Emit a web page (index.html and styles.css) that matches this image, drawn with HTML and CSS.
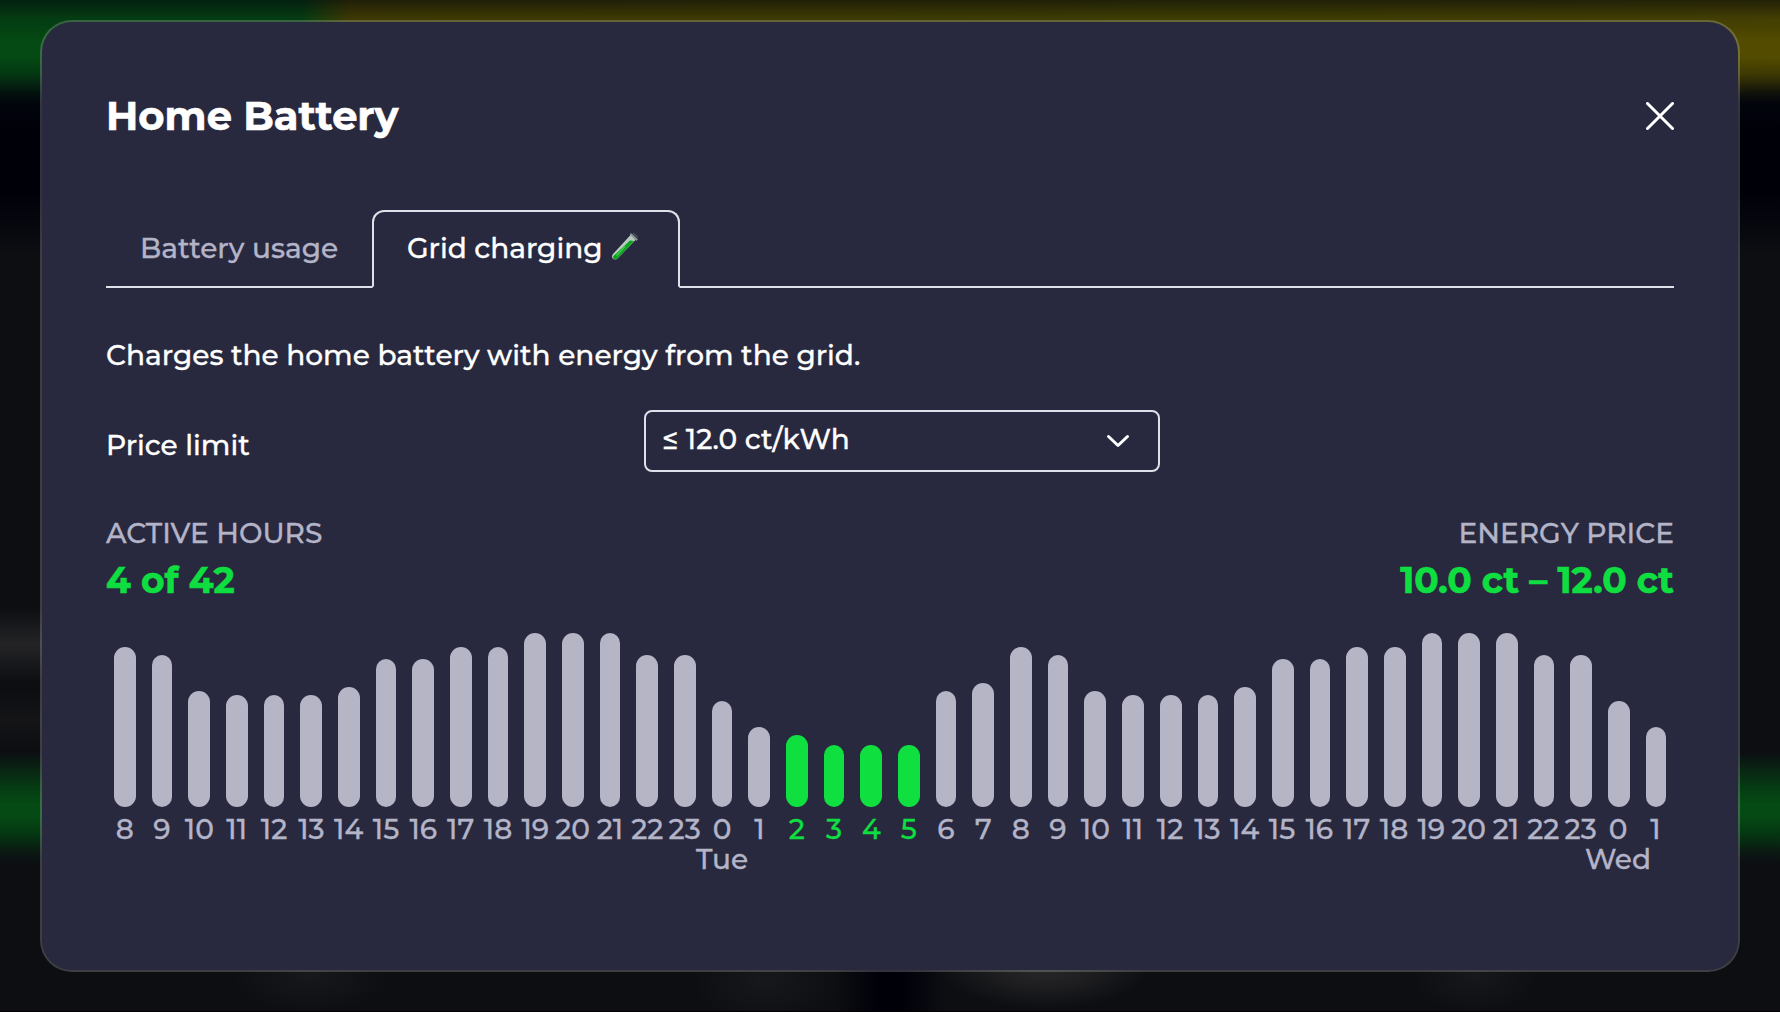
FILE: index.html
```html
<!DOCTYPE html>
<html lang="en">
<head>
<meta charset="utf-8">
<title>Home Battery</title>
<link rel="stylesheet" href="styles.css">
</head>
<body>
<div class="glow glow-top"></div>
<div class="glow glow-mid"></div>
<main class="modal">
  <header class="modal-header">
    <h1 class="title">Home Battery</h1>
    <button class="close" aria-label="Close"><svg width="28" height="28" viewBox="0 0 28 28"><path d="M1.5 1.5l25 25M26.5 1.5l-25 25"/></svg></button>
  </header>
  <nav class="tabs">
    <a class="tab tab-usage">Battery usage</a>
    <a class="tab tab-active">Grid charging
      <svg class="tube" width="28" height="29" viewBox="0 0 28 29"><path d="M20 2.5L2 22Q0 24.8 2 26.8Q4.5 28.6 7 26L24.5 8Z" fill="#b9c8c0"/><path d="M19 8.5L3 23.5Q1.2 25 2.5 26.6Q4.7 28 6.8 26L23 9Z" fill="#08a51b"/><path d="M14 14.5L5.5 23.5" stroke="#3ccb4b" stroke-width="1.6"/><path d="M20 2.5L25.5 7.5" stroke="#8f9a96" stroke-width="2.2" stroke-linecap="round"/><path d="M22.5 1.5L26.3 4.8" stroke="#4a5253" stroke-width="1.6" stroke-linecap="round"/></svg>
    </a>
  </nav>
  <p class="description">Charges the home battery with energy from the grid.</p>
  <div class="form-row">
    <label class="label">Price limit</label>
    <div class="select"><span>≤ 12.0 ct/kWh</span><svg width="24" height="16" viewBox="0 0 24 16"><path d="M2.5 3.5L12 12.5L21.5 3.5"/></svg></div>
  </div>
  <div class="summary">
    <div><div class="caption">ACTIVE HOURS</div><div class="value">4 of 42</div></div>
    <div class="end"><div class="caption">ENERGY PRICE</div><div class="value">10.0 ct – 12.0 ct</div></div>
  </div>
  <div class="chart" id="chart"></div>
</main>
<script src="chart.js"></script>
</body>
</html>
```
FILE: chart.js
```js
const heights = [160,152,116,112,112,112,120,148,148,160,160,174,174,174,152,152,106,80,72,62,62,62,116,124];
const chart = document.getElementById('chart');
const slotWidth = 1568 / 42;
const step = 37.345;
const snap = v => 2 * Math.round(v / 2);
for (let i = 0; i < 42; i++) {
  const hour = (i + 8) % 24;
  const slot = document.createElement('div');
  slot.className = 'slot' + (i >= 18 && i <= 21 ? ' active' : '');
  const day = hour === 0 ? (i < 24 ? 'Tue' : 'Wed') : '';
  const left = snap(i * step + 8);
  const width = snap((i + 1) * step - 8) - left;
  const label = day ? `<div class="day">${day}</div>` : '';
  slot.innerHTML = `<div class="bar" style="height:${heights[i % 24]}px;width:${width}px;margin-left:${left - i * slotWidth}px"></div><div class="hour">${hour}</div>${label}`;
  chart.append(slot);
}
```
FILE: styles.css
```css
* { box-sizing: border-box; }
body {
  margin: 0;
  width: 1780px;
  height: 1012px;
  overflow: hidden;
  padding: 20px 40px 40px;
  position: relative;
  font-family: Montserrat, Inter, "Liberation Sans", sans-serif;
  font-size: 28px;
  font-weight: 500;
  line-height: 30px;
  color: #fff;
  -webkit-text-stroke: .3px currentColor;
  background:
    linear-gradient(#000, #000) 0 1011px / 100% 1px no-repeat,
    radial-gradient(closest-side, #29292b, #1d1d1f 50%, transparent) 940px 925px / 210px 84px no-repeat,
    radial-gradient(closest-side, #17181b, transparent) 690px 935px / 150px 90px no-repeat,
    radial-gradient(closest-side, #17181b, transparent) 1410px 935px / 130px 80px no-repeat,
    radial-gradient(closest-side, #17181b, transparent) 230px 935px / 160px 80px no-repeat,
    linear-gradient(90deg, transparent, #000009 40%, #000009 60%, transparent) 835px 960px / 110px 52px no-repeat,
    linear-gradient(transparent, #242426 50%, transparent) 0 607px / 60px 75px no-repeat,
    linear-gradient(transparent, #141416 50%, transparent) 0 690px / 60px 60px no-repeat,
    linear-gradient(#03060e 95px, #000009 130px, #000009 190px, #0c0e12 255px);
}
.glow { position: absolute; left: 0; width: 100%; }
.glow-top {
  top: 0;
  height: 104px;
  background: linear-gradient(90deg, #054914 300px, #4c4500 350px, #4c4a00 1200px, #524b00);
  -webkit-mask-image: linear-gradient(rgba(0,0,0,.4), rgba(0,0,0,.8) 18px, #000 40px, #000 58px, rgba(0,0,0,.75) 74px, rgba(0,0,0,.15) 94px, transparent);
  mask-image: linear-gradient(rgba(0,0,0,.4), rgba(0,0,0,.8) 18px, #000 40px, #000 58px, rgba(0,0,0,.75) 74px, rgba(0,0,0,.15) 94px, transparent);
}
.glow-mid {
  top: 752px;
  height: 112px;
  background: linear-gradient(transparent, #053c13 32%, #054914 46%, #054914 58%, #053512 74%, #0a1812 90%, transparent);
}
.modal {
  position: relative;
  height: 952px;
  padding: 0 64px;
  border: 2px solid rgba(255, 255, 255, .2);
  border-radius: 32px;
  background: #28293e;
  background-clip: padding-box;
}
.modal-header {
  display: flex;
  justify-content: space-between;
  align-items: center;
  height: 188px;
}
.title { margin: 0; font-size: 40px; font-weight: 700; line-height: 48px; -webkit-text-stroke-width: .6px; }
.close { padding: 0; border: 0; background: none; height: 28px; }
svg { display: block; fill: none; stroke: none; }
.close svg { stroke: #fff; stroke-width: 3; stroke-linecap: round; }
.tabs { display: flex; height: 78px; }
.tabs::after { content: ""; flex: 1; border-bottom: 2px solid #e0e0ea; }
.tab { display: flex; align-items: center; white-space: nowrap; border-bottom: 2px solid #e0e0ea; }
.tab-usage { width: 266px; padding: 0 0 1px 34px; color: #b4b4c8; }
.tab-active {
  width: 308px;
  padding: 0 0 3px 33px;
  gap: 8px;
  border: 2px solid #e0e0ea;
  border-bottom-color: transparent;
  border-radius: 12px 12px 0 0;
}
.tube { margin-bottom: 2px; }
.description { margin: 52px 0 0; height: 30px; white-space: nowrap; }
.form-row { display: flex; margin-top: 40px; height: 62px; }
.label { width: 538px; padding-top: 20px; }
.select {
  display: flex;
  align-items: center;
  justify-content: space-between;
  width: 516px;
  padding: 0 28px 4px 16px;
  border: 2px solid #e0e0ea;
  border-radius: 8px;
}
.select svg { position: relative; top: 2px; stroke: #fff; stroke-width: 3; stroke-linecap: round; stroke-linejoin: round; }
.summary { display: flex; justify-content: space-between; margin-top: 46px; }
.end { text-align: right; }
.caption { color: #b4b4c8; }
.value { margin-top: 8px; height: 46px; font-size: 36px; font-weight: 700; line-height: 48px; color: #0fde41; -webkit-text-stroke-width: .6px; }
.chart { display: grid; grid-template-columns: repeat(42, 1fr); height: 290px; margin-top: 31px; }
.slot { display: grid; grid-template-rows: 174px 37px 30px; align-content: start; color: #b4b4c8; }
.bar { align-self: end; border-radius: 11px; background: #b5b5c6; }
.hour, .day { justify-self: center; white-space: nowrap; width: 0; display: flex; justify-content: center; }
.hour { padding-top: 7px; }
.active { color: #0fde41; }
.active .bar { background: #0fe040; }
```
